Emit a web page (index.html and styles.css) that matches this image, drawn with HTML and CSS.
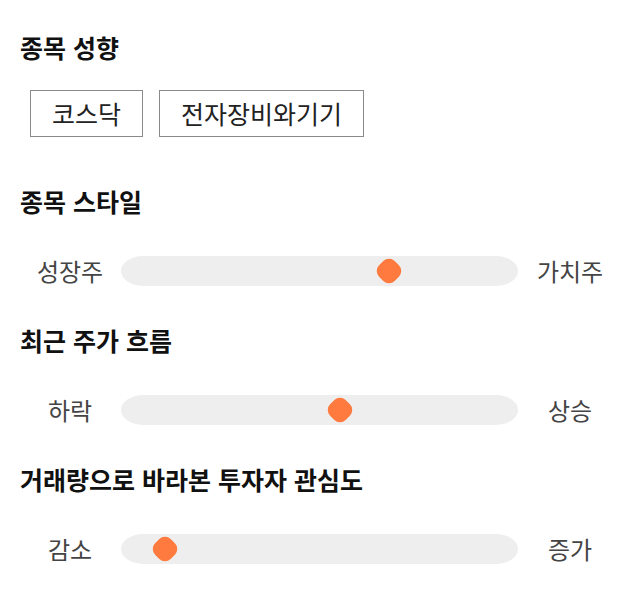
FILE: index.html
```html
<!DOCTYPE html>
<html lang="ko">
<head>
    <meta charset="UTF-8">
    <meta name="viewport" content="width=device-width, initial-scale=1.0">
    <title>종목 성향</title>
    <link rel="stylesheet" href="styles.css">
</head>
<body>
    <div class="panel">
        <h3 class="title">종목 성향</h3>
        <div class="tags">
            <span class="tag">코스닥</span>
            <span class="tag">전자장비와기기</span>
        </div>

        <h3 class="title">종목 스타일</h3>
        <div class="range">
            <span class="range-label">성장주</span>
            <div class="track">
                <span class="thumb" style="left: 67.5%;"></span>
            </div>
            <span class="range-label">가치주</span>
        </div>

        <h3 class="title">최근 주가 흐름</h3>
        <div class="range">
            <span class="range-label">하락</span>
            <div class="track">
                <span class="thumb" style="left: 55.2%;"></span>
            </div>
            <span class="range-label">상승</span>
        </div>

        <h3 class="title">거래량으로 바라본 투자자 관심도</h3>
        <div class="range">
            <span class="range-label">감소</span>
            <div class="track">
                <span class="thumb" style="left: 11%;"></span>
            </div>
            <span class="range-label">증가</span>
        </div>
    </div>
</body>
</html>
```

FILE: styles.css
```css
body {
    margin: 0;
    background: #fff;
    font-family: "Noto Sans CJK KR", "Noto Sans", sans-serif;
}
.panel {
    padding: 30px 20px 0 20px;
}
.title {
    margin: 0;
    font-size: 25px;
    font-weight: bold;
    line-height: 34px;
    color: #111;
}
.tags {
    display: flex;
    gap: 16px;
    padding: 26px 10px 47px 10px;
}
.tag {
    border: 1px solid #8a8a8a;
    padding: 0 21px;
    height: 45px;
    line-height: 45px;
    font-size: 25px;
    color: #222;
}
.range {
    display: flex;
    align-items: center;
    padding: 38px 0 37px 0;
}
.range-label {
    width: 100px;
    text-align: center;
    font-size: 24px;
    line-height: 30px;
    color: #444;
}
.track {
    position: relative;
    flex: 1;
    height: 30px;
    margin: 0 2px 0 1px;
    background: #eeeeee;
    border-radius: 22px / 15px;
}
.thumb {
    position: absolute;
    top: 4px;
    width: 22px;
    height: 22px;
    margin-left: -11px;
    background: #ff7a3e;
    border-radius: 8px;
    transform: rotate(45deg);
}
```
